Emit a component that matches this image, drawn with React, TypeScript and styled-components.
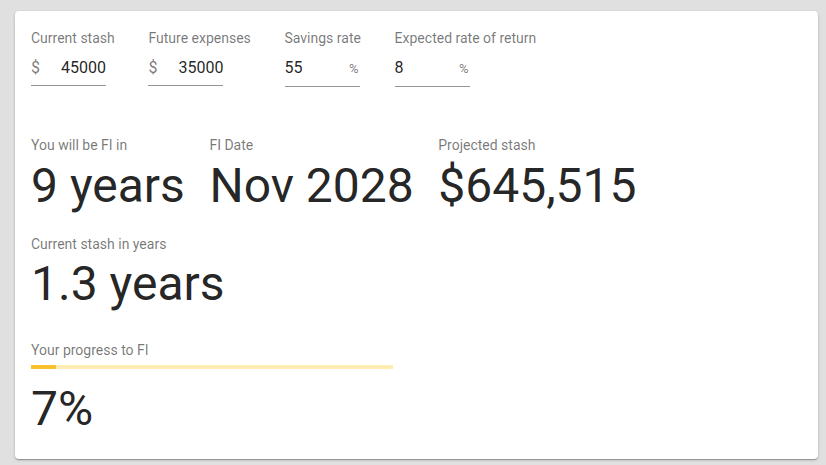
import React from "react";
import styled, { createGlobalStyle } from "styled-components";

const GlobalStyle = createGlobalStyle`
  html, body {
    margin: 0;
    padding: 0;
    background: #e0e0e0;
  }
  body {
    padding: 11px 8px 6px 15px;
    font-family: Roboto, "Liberation Sans", Arial, sans-serif;
  }
  * { box-sizing: border-box; }
`;

const Card = styled.div`
  background: #fff;
  border-radius: 4px;
  box-shadow: 0px 1px 3px 0px rgba(0, 0, 0, 0.2), 0px 1px 1px 0px rgba(0, 0, 0, 0.14),
    0px 2px 1px -1px rgba(0, 0, 0, 0.12);
  height: 448px;
  padding: 18.5px 16px 20px 16px;
  display: flex;
  flex-direction: column;
`;

const FieldsRow = styled.div`
  display: flex;
  gap: 33.7px;
`;

const Field = styled.div`
  display: flex;
  flex-direction: column;
`;

const Label = styled.div`
  font-size: 14px;
  line-height: 16px;
  color: rgba(0, 0, 0, 0.54);
  white-space: nowrap;
`;

const InputBox = styled.div`
  width: 75px;
  margin-top: 6px;
  padding: 6px 0 8px 0;
  border-bottom: 1px solid rgba(0, 0, 0, 0.42);
  display: flex;
  align-items: baseline;
  justify-content: space-between;
`;

const InputValue = styled.span`
  font-size: 16px;
  line-height: 19px;
  color: rgba(0, 0, 0, 0.87);
`;

const Adornment = styled.span<{ $pct?: boolean }>`
  font-size: ${(p) => (p.$pct ? "13px" : "16px")};
  line-height: 19px;
  color: rgba(0, 0, 0, 0.54);
  margin-right: ${(p) => (p.$pct ? "1px" : "0")};
`;

const StatsRow = styled.div<{ $top: number }>`
  display: flex;
  gap: 24.5px;
  margin-top: ${(p) => p.$top}px;
`;

const Stat = styled.div`
  display: flex;
  flex-direction: column;
`;

const BigValue = styled.div<{ $top?: number }>`
  font-size: 48px;
  line-height: 56px;
  color: rgba(0, 0, 0, 0.87);
  margin-top: ${(p) => p.$top ?? 4.5}px;
  white-space: nowrap;
`;

const Track = styled.div`
  width: 362px;
  height: 4px;
  margin-top: 7px;
  background: #ffecb3;
  overflow: hidden;
`;

const Fill = styled.div`
  height: 100%;
  background: #fbc02d;
`;

type FieldProps = { label: string; value: string; prefix?: string; suffix?: string };

const InputField = ({ label, value, prefix, suffix }: FieldProps) => (
  <Field>
    <Label>{label}</Label>
    <InputBox>
      {prefix && <Adornment>{prefix}</Adornment>}
      <InputValue>{value}</InputValue>
      {suffix && <Adornment $pct>{suffix}</Adornment>}
    </InputBox>
  </Field>
);

export default function App() {
  const progress = 7;
  return (
    <>
      <GlobalStyle />
      <Card>
        <FieldsRow>
          <InputField label="Current stash" prefix="$" value="45000" />
          <InputField label="Future expenses" prefix="$" value="35000" />
          <InputField label="Savings rate" value="55" suffix="%" />
          <InputField label="Expected rate of return" value="8" suffix="%" />
        </FieldsRow>

        <StatsRow $top={50.5}>
          <Stat>
            <Label>You will be FI in</Label>
            <BigValue>9 years</BigValue>
          </Stat>
          <Stat>
            <Label>FI Date</Label>
            <BigValue>Nov 2028</BigValue>
          </Stat>
          <Stat>
            <Label>Projected stash</Label>
            <BigValue>$645,515</BigValue>
          </Stat>
        </StatsRow>

        <StatsRow $top={22.8}>
          <Stat>
            <Label>Current stash in years</Label>
            <BigValue $top={4.2}>1.3 years</BigValue>
          </Stat>
        </StatsRow>

        <StatsRow $top={30}>
          <Stat>
            <Label>Your progress to FI</Label>
            <Track>
              <Fill style={{ width: `${progress}%` }} />
            </Track>
            <BigValue $top={12}>{progress}%</BigValue>
          </Stat>
        </StatsRow>
      </Card>
    </>
  );
}
